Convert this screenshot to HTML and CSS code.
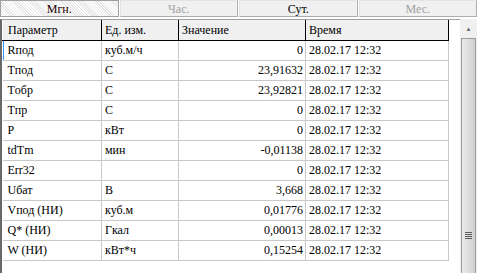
FILE: index.html
```html
<!DOCTYPE html>
<html lang="ru">
<head>
    <meta charset="UTF-8">
    <title>Архив</title>
    <link rel="stylesheet" href="styles.css">
</head>
<body>
    <div class="tabs">
        <div class="tab active">Мгн.</div>
        <div class="tab disabled">Час.</div>
        <div class="tab">Сут.</div>
        <div class="tab disabled">Мес.</div>
    </div>
    <div class="grid-box">
        <div class="grid-area">
            <table class="grid">
                <thead>
                    <tr>
                        <th class="c-param">Параметр</th>
                        <th class="c-unit">Ед. изм.</th>
                        <th class="c-value">Значение</th>
                        <th class="c-time">Время</th>
                    </tr>
                </thead>
                <tbody>
                    <tr class="current"><td>Rпод</td><td>куб.м/ч</td><td class="num">0</td><td>28.02.17 12:32</td></tr>
                    <tr><td>Tпод</td><td>С</td><td class="num">23,91632</td><td>28.02.17 12:32</td></tr>
                    <tr><td>Tобр</td><td>С</td><td class="num">23,92821</td><td>28.02.17 12:32</td></tr>
                    <tr><td>Tпр</td><td>С</td><td class="num">0</td><td>28.02.17 12:32</td></tr>
                    <tr><td>P</td><td>кВт</td><td class="num">0</td><td>28.02.17 12:32</td></tr>
                    <tr><td>tdTm</td><td>мин</td><td class="num">-0,01138</td><td>28.02.17 12:32</td></tr>
                    <tr><td>Err32</td><td></td><td class="num">0</td><td>28.02.17 12:32</td></tr>
                    <tr><td>Uбат</td><td>В</td><td class="num">3,668</td><td>28.02.17 12:32</td></tr>
                    <tr><td>Vпод (НИ)</td><td>куб.м</td><td class="num">0,01776</td><td>28.02.17 12:32</td></tr>
                    <tr><td>Q* (НИ)</td><td>Гкал</td><td class="num">0,00013</td><td>28.02.17 12:32</td></tr>
                    <tr><td>W (НИ)</td><td>кВт*ч</td><td class="num">0,15254</td><td>28.02.17 12:32</td></tr>
                </tbody>
            </table>
        </div>
        <div class="scrollbar">
            <div class="arrow">&#9650;</div>
            <div class="thumb"><span class="grip"></span></div>
        </div>
    </div>
</body>
</html>
```

FILE: styles.css
```css
body {
    margin: 0;
    width: 477px;
    height: 273px;
    overflow: hidden;
    background-color: #ffffff;
    font-family: "Liberation Serif", "Times New Roman", serif;
    font-size: 12px;
    color: #000000;
}

.tabs {
    display: flex;
    gap: 1px;
    height: 17px;
    margin-bottom: 2px;
}

.tab {
    flex: 1;
    text-align: center;
    line-height: 16px;
    background-color: #f0f0f0;
    border: 1px solid #adadad;
    border-top-color: #e3e3e3;
    border-left-color: #e3e3e3;
}

.tab.active {
    color: #200000;
    background-color: #f4f4f4;
    background-image: repeating-linear-gradient(45deg, #ffffff 0 1px, #e6e6e6 1px 2px);
    border-color: #a0a0a0;
}

.tab.disabled {
    color: #a0a0a0;
}

.grid-box {
    display: flex;
    height: 254px;
}

.grid-area {
    width: 458px;
    border-left: 2px solid #696969;
    border-top: 1px solid #a0a0a0;
}

.grid {
    border-collapse: collapse;
    table-layout: fixed;
    width: 444px;
}

.grid th,
.grid td {
    height: 19px;
    padding: 0 0 0 3px;
    text-align: left;
    white-space: nowrap;
    overflow: hidden;
}

.grid th:first-child,
.grid td:first-child {
    padding-left: 5px;
}

.grid th {
    font-weight: normal;
    height: 20px;
    background-color: #f0f0f0;
    border-right: 1px solid #000000;
    border-bottom: 1px solid #000000;
    border-left: 1px solid #ffffff;
}

.grid td {
    border-right: 1px solid #c8c8c8;
    border-bottom: 1px solid #c8c8c8;
}

.grid td.num {
    text-align: right;
    padding: 0 2px 0 0;
}

.grid tr.current td:first-child {
    box-shadow: inset 1px 0 0 #3399ff;
}

.c-param { width: 93px; }
.c-unit { width: 73px; }
.c-value { width: 123px; }
.c-time { width: 139px; }

.scrollbar {
    width: 17px;
    display: flex;
    flex-direction: column;
    background-color: #f0f0f0;
}

.arrow {
    height: 19px;
    font-size: 6px;
    text-align: center;
    line-height: 20px;
    color: #606060;
}

.thumb {
    flex: 1;
    margin: 0 1px;
    border: 1px solid #9b9b9b;
    border-bottom: none;
    background-image: linear-gradient(90deg, #eaeaea, #dedede 50%, #cfcfcf);
    display: flex;
    justify-content: center;
    align-items: flex-end;
    padding-bottom: 34px;
}

.grip {
    width: 7px;
    height: 7px;
    background-image: repeating-linear-gradient(180deg, #5a5a5a 0 1px, transparent 1px 2px);
}
```
